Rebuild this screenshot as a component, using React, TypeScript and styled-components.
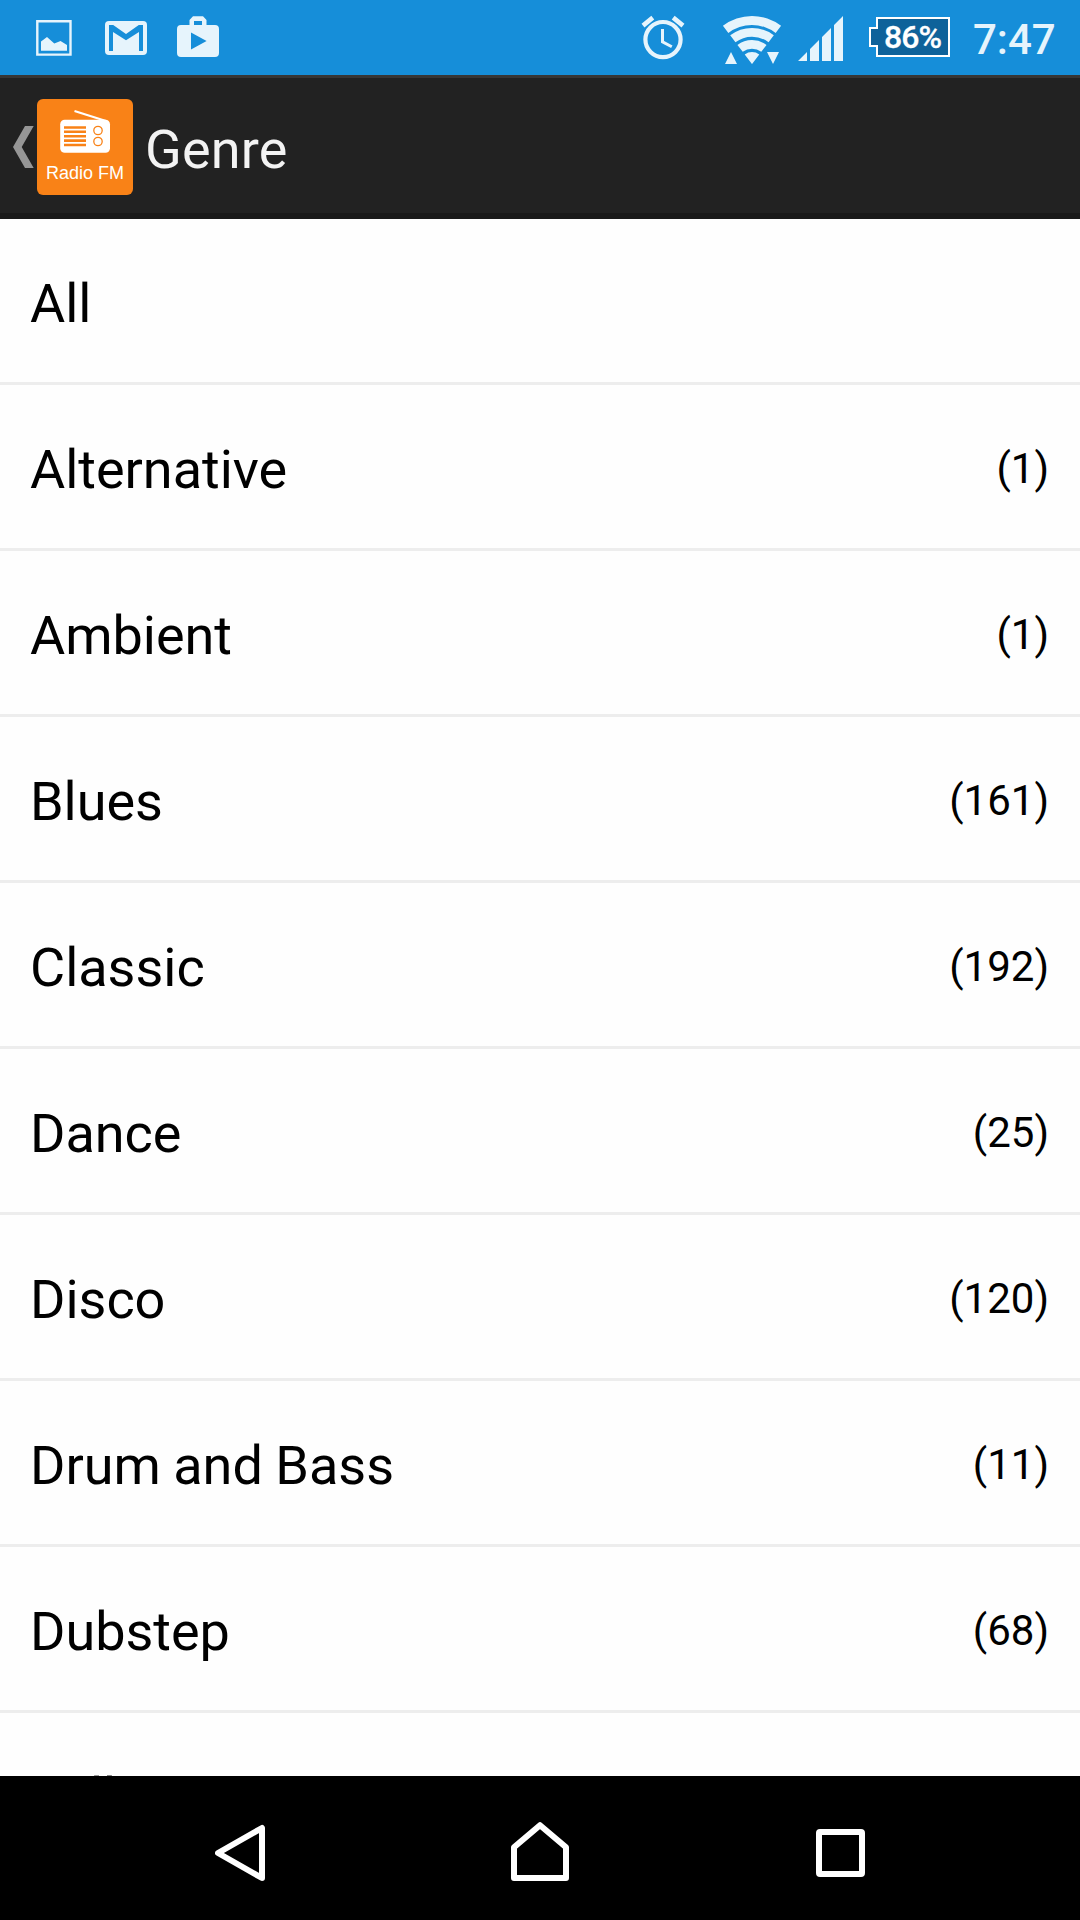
import React from "react";
import styled, { createGlobalStyle } from "styled-components";

const GlobalStyle = createGlobalStyle`
  * { box-sizing: border-box; }
  body { margin: 0; background: #000; font-family: Roboto, "Noto Sans", sans-serif; }
`;

const STATUS_BLUE = "#168ed9";
const STATUS_ICON = "#e6f4fc";

const Screen = styled.div`
  display: flex;
  flex-direction: column;
  width: 1080px;
  height: 1920px;
  overflow: hidden;
`;

const StatusBar = styled.header`
  display: flex;
  justify-content: space-between;
  flex: none;
  height: 75px;
  padding: 0 25px 0 36px;
  background: ${STATUS_BLUE};
`;

const StatusGroup = styled.div`
  display: flex;
  align-items: flex-start;
`;

const StatusIcon = styled.svg<{ $before?: number }>`
  display: block;
  flex: none;
  height: 75px;
  margin-left: ${(p) => p.$before ?? 0}px;
  fill: ${STATUS_ICON};
`;

const Battery = styled.div`
  display: grid;
  width: 81px;
  height: 75px;
  margin-left: 26px;
  > * { grid-area: 1 / 1; }
`;

const BatteryLevel = styled.span`
  padding: 18px 0 0 15px;
  color: #fff;
  font-size: 32px;
  font-weight: 500;
  letter-spacing: -0.9px;
  line-height: 38px;
  white-space: nowrap;
  -webkit-text-stroke: 0.3px #fff;
`;

const Clock = styled.time`
  width: 82px;
  margin: 15px 0 0 23px;
  color: ${STATUS_ICON};
  font-size: 42px;
  font-weight: 500;
  line-height: 49px;
  white-space: nowrap;
`;

const ActionBar = styled.div`
  display: flex;
  align-items: flex-start;
  flex: none;
  height: 144px;
  padding: 21px 0 0 12px;
  background: #222;
  border-top: 3px solid #363636;
  border-bottom: 6px solid #1a1a1a;
`;

const UpArrow = styled.svg`
  display: block;
  margin: 27px 3px 0 0;
  fill: #969696;
`;

const AppTile = styled.div`
  display: flex;
  flex-direction: column;
  align-items: center;
  width: 96px;
  height: 96px;
  background: #f98217;
  border-radius: 6px;
`;

const TileLabel = styled.span`
  margin-top: 1px;
  color: #fff;
  font: 18px/20px "Liberation Sans", Arial, sans-serif;
  white-space: nowrap;
`;

const Title = styled.h1`
  margin: 19px 0 0 12px;
  color: #f3f3f3;
  font-size: 54px;
  font-weight: 400;
  letter-spacing: 0.2px;
  line-height: 63px;
`;

const GenreList = styled.ul`
  flex: 1;
  min-height: 0;
  margin: 0;
  padding: 0;
  overflow: hidden;
  list-style: none;
  background: #fefefe;
`;

const GenreRow = styled.li`
  display: flex;
  align-items: center;
  justify-content: space-between;
  height: 166px;
  padding: 0 31px 0 30px;
  border-bottom: 3px solid #ededed;
  color: #000;
`;

const GenreName = styled.span`
  padding-top: 7px;
  font-size: 54px;
  letter-spacing: -0.02px;
  word-spacing: -0.9px;
  line-height: 64px;
`;

const GenreCount = styled.span`
  padding-top: 4px;
  font-size: 42px;
  line-height: 49px;
`;

const NavBar = styled.nav`
  display: flex;
  align-items: flex-start;
  flex: none;
  gap: 246px;
  height: 144px;
  padding: 46px 0 0 215px;
  background: #000;
`;

const NavIcon = styled.svg`
  display: block;
  flex: none;
  fill: none;
  stroke: #fff;
  stroke-width: 6;
  stroke-linejoin: round;
`;

const RecentsIcon = styled.span`
  width: 49px;
  height: 48px;
  margin: 7px 0 0 1px;
  border: 6px solid #fff;
  border-radius: 4px;
`;

const genres: { name: string; count?: number }[] = [
  { name: "All" },
  { name: "Alternative", count: 1 },
  { name: "Ambient", count: 1 },
  { name: "Blues", count: 161 },
  { name: "Classic", count: 192 },
  { name: "Dance", count: 25 },
  { name: "Disco", count: 120 },
  { name: "Drum and Bass", count: 11 },
  { name: "Dubstep", count: 68 },
  { name: "Folk" },
];

// Annular sector of the Wi-Fi fan, opening upwards from (cx, cy).
function fanBand(cx: number, cy: number, outer: number, inner: number) {
  const dx = Math.sin(0.651);
  const dy = Math.cos(0.651);
  const at = (r: number, side: number) => `${cx + side * r * dx} ${cy - r * dy}`;
  return `M${at(outer, -1)}A${outer} ${outer} 0 0 1 ${at(outer, 1)}L${at(inner, 1)}A${inner} ${inner} 0 0 0 ${at(inner, -1)}Z`;
}

function Notifications() {
  return (
    <StatusGroup>
      <StatusIcon width={36} viewBox="0 0 36 75">
        <path
          d="M1.3 21.3H34.5V54.6H1.3Z"
          fill="none"
          stroke={STATUS_ICON}
          strokeWidth="2.4"
        />
        <path d="M5 41.5L11 37L18.3 43.6L24.5 41L31 45V50.7H5Z" />
      </StatusIcon>
      <StatusIcon width={42} viewBox="0 0 42 75" $before={33}>
        <rect y="21" width="42" height="34" rx="4" />
        <path
          d="M4 25H8.2L21 34L33.8 25H38V51H34V32L21 40.3L8 32V51H4Z"
          fill={STATUS_BLUE}
        />
      </StatusIcon>
      <StatusIcon width={42} viewBox="0 0 42 75" $before={30}>
        <path
          fillRule="evenodd"
          d="M4 25H12.5V20L16 16.2H26L29.5 20V25H38Q42 25 42 29V53Q42 57 38 57H4Q0 57 0 53V29Q0 25 4 25ZM17 25H25V21H17ZM14 32.5V49.5L29.6 41Z"
        />
      </StatusIcon>
    </StatusGroup>
  );
}

function SystemStatus() {
  return (
    <StatusGroup>
      <StatusIcon width={44} viewBox="641 0 44 75">
        <g fill="none" stroke={STATUS_ICON}>
          <circle cx="663" cy="39.6" r="17.6" strokeWidth="4.2" />
          <path d="M662.5 29V41.8L671.8 46.8" strokeWidth="3" />
          <path d="M643 25.6L652.8 17.6M673.2 17.6L683 25.6" strokeWidth="4.6" />
        </g>
      </StatusIcon>
      <StatusIcon width={60} viewBox="722 0 60 75" $before={37}>
        <path d={fanBand(752, 64, 48, 39)} />
        <path d={fanBand(752, 64, 36, 27.3)} />
        <path d={fanBand(752, 64, 24, 15.3)} />
        <path d={fanBand(752, 64, 12, 0.1)} />
        <path d="M731 52L737 64H725ZM767 52H779L773 64Z" />
      </StatusIcon>
      <StatusIcon width={45} viewBox="0 0 45 75" $before={16}>
        <path d="M0 61L9 52V61ZM12 49L21 40V61H12ZM24 37L33 28V61H24ZM36 25L45 16V61H36Z" />
      </StatusIcon>
      <Battery>
        <StatusIcon width={81} viewBox="0 0 81 75">
          <path
            d="M8 18H80V56H8V46H1V28H8Z"
            fill="#0e629a"
            stroke="#fff"
            strokeWidth="2"
          />
        </StatusIcon>
        <BatteryLevel>86%</BatteryLevel>
      </Battery>
      <Clock>7:47</Clock>
    </StatusGroup>
  );
}

function RadioLogo() {
  return (
    <svg width="96" height="63" viewBox="37 99 96 63">
      <path d="M74.5 111L106 121" stroke="#fff" strokeWidth="2.2" />
      <rect x="60.2" y="119.8" width="49.8" height="33" rx="4.5" fill="#fff" />
      <g stroke="#f98217" fill="none">
        <path
          d="M64 127.5H86M64 131.8H86M64 136.2H86M64 140.6H86M64 145H86"
          strokeWidth="2.6"
        />
        <circle cx="98" cy="130.5" r="4.2" strokeWidth="1.3" />
        <circle cx="98" cy="141.5" r="4.2" strokeWidth="1.3" />
      </g>
    </svg>
  );
}

export default function App() {
  return (
    <Screen>
      <GlobalStyle />
      <StatusBar>
        <Notifications />
        <SystemStatus />
      </StatusBar>
      <ActionBar>
        <UpArrow width="22" height="42" viewBox="0 0 22 42">
          <path d="M13 0H21.7L9.7 21L21.7 42H13L1 21Z" />
        </UpArrow>
        <AppTile>
          <RadioLogo />
          <TileLabel>Radio FM</TileLabel>
        </AppTile>
        <Title>Genre</Title>
      </ActionBar>
      <GenreList>
        {genres.map((g) => (
          <GenreRow key={g.name}>
            <GenreName>{g.name}</GenreName>
            {g.count !== undefined && <GenreCount>({g.count})</GenreCount>}
          </GenreRow>
        ))}
      </GenreList>
      <NavBar>
        <NavIcon width="50" height="60" viewBox="215 1822 50 60">
          <path d="M218 1853L262 1828V1878Z" />
        </NavIcon>
        <NavIcon width="58" height="60" viewBox="511 1822 58 60">
          <path d="M514 1847.3L540 1825.2L566 1847.3V1878H514Z" />
        </NavIcon>
        <RecentsIcon />
      </NavBar>
    </Screen>
  );
}
